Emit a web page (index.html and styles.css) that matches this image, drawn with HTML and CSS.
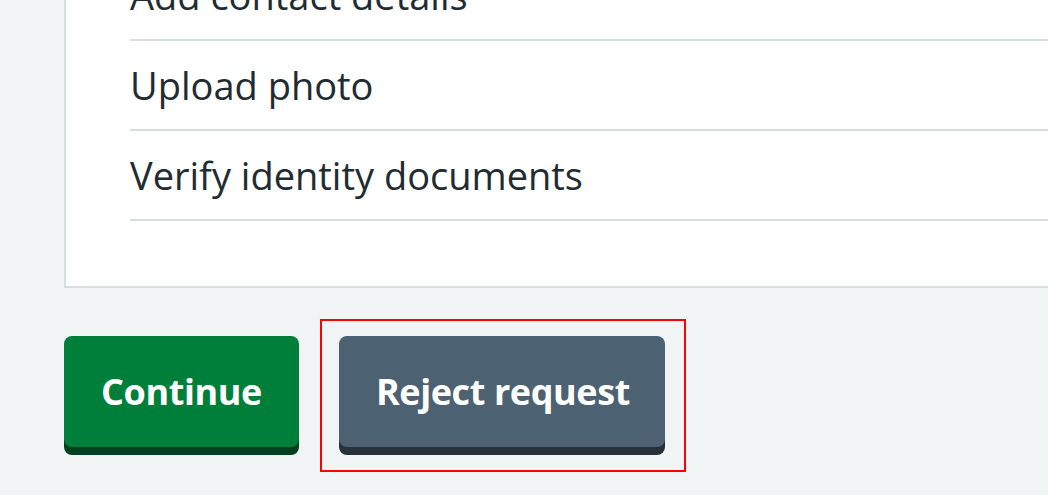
FILE: index.html
```html
<!DOCTYPE html>
<html>
<head>
  <title>Review request</title>
  <link rel="stylesheet" href="styles.css">
</head>
<body>
  <div class="page">
    <div class="card">
      <ul class="task-list">
        <li class="task-item">Add contact details</li>
        <li class="task-item">Upload photo</li>
        <li class="task-item">Verify identity documents</li>
      </ul>
    </div>

    <div class="actions">
      <button class="button">Continue</button>
      <div class="highlight">
        <button class="button button-secondary">Reject request</button>
      </div>
    </div>
  </div>
</body>
</html>
```

FILE: styles.css
```css
/* review page, zoomed in */
body {
  margin: 0;
  background-color: #f0f4f5;
  font-family: "Open Sans", Arial, sans-serif;
  color: #212b32;
}

.page {
  margin-top: -49px;
  padding-left: 64px;
}

.card {
  background-color: #fff;
  border-left: 2px solid #d8dde0;
  border-bottom: 2px solid #d8dde0;
  padding: 0 0 65px 64px;
}

.task-list {
  list-style: none;
  margin: 0;
  padding: 0;
}

.task-item {
  font-size: 38px;
  line-height: 88px;
  border-bottom: 2px solid #d8dde0;
}

.actions {
  display: flex;
  align-items: center;
  gap: 21px;
  margin-top: 31px;
}

.button {
  font-family: inherit;
  font-size: 36px;
  font-weight: bold;
  letter-spacing: -0.4px;
  color: #fff;
  background-color: #007f3b;
  border: none;
  border-radius: 8px;
  height: 111px;
  padding: 0 37px;
  box-shadow: 0 8px 0 #00401e;
  margin: 0 0 8px 0;
  cursor: pointer;
}

.button-secondary {
  background-color: #4c6272;
  box-shadow: 0 8px 0 #263139;
  padding: 0 35px 0 37px;
  margin: 0;
}

.highlight {
  display: flex;
  border: 2px solid #f00;
  padding: 15px 19px 23px 17px;
}
```
